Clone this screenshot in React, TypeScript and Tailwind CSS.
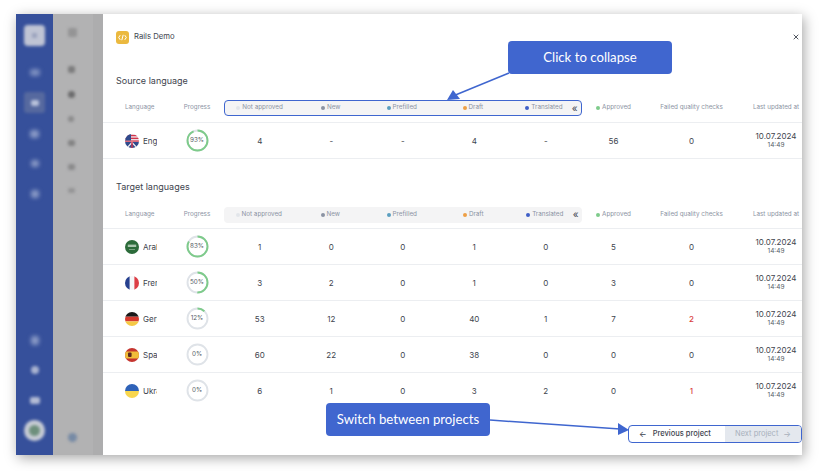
const gridCols = "grid grid-cols-[67px_54px_71.5px_71.5px_71.5px_71.5px_71.5px_64px_92px_65px]";

const groupCols = [
  { label: "Not approved", dot: "bg-[#e2e5ea]" },
  { label: "New", dot: "bg-[#8b93a3]" },
  { label: "Prefilled", dot: "bg-[#5b9fc0]" },
  { label: "Draft", dot: "bg-[#ee9f45]" },
  { label: "Translated", dot: "bg-[#3f5fc7]" },
];

function Flag({ code }: { code: string }) {
  return (
    <svg width="14" height="14" viewBox="0 0 14 14" className="shrink-0">
      <defs>
        <clipPath id={`clip-${code}`}>
          <circle cx="7" cy="7" r="7" />
        </clipPath>
      </defs>
      <g clipPath={`url(#clip-${code})`}>
        {code === "en" && (
          <>
            <rect width="14" height="14" fill="#f0eef2" />
            <rect y="0.8" width="14" height="1.5" fill="#d2334a" />
            <rect y="3.6" width="14" height="1.5" fill="#d2334a" />
            <rect y="6.4" width="14" height="1.3" fill="#d2334a" />
            <rect width="6" height="6.5" fill="#2f4a8c" />
            <rect y="8" width="14" height="6" fill="#2f4a8c" />
            <path d="M2 14 7 8.5 12 14" stroke="#f0eef2" strokeWidth="1.2" fill="none" />
            <path d="M7 8v6" stroke="#d2334a" strokeWidth="1.4" />
          </>
        )}
        {code === "ar" && (
          <>
            <rect width="14" height="14" fill="#2c6b3a" />
            <rect x="2.8" y="4.6" width="8.4" height="2.4" fill="#a9c5ae" />
            <rect x="4" y="9.2" width="6" height="0.6" fill="#a9c5ae" />
          </>
        )}
        {code === "fr" && (
          <>
            <rect width="14" height="14" fill="#f6f6f8" />
            <rect width="4.6" height="14" fill="#26408f" />
            <rect x="9.4" width="4.6" height="14" fill="#dc3d45" />
          </>
        )}
        {code === "de" && (
          <>
            <rect width="14" height="4.7" fill="#1a1a1a" />
            <rect y="4.7" width="14" height="4.7" fill="#d63a2f" />
            <rect y="9.4" width="14" height="4.6" fill="#f5c945" />
          </>
        )}
        {code === "es" && (
          <>
            <rect width="14" height="14" fill="#c5352f" />
            <rect y="3.5" width="14" height="7" fill="#f0bd3a" />
            <rect x="3" y="4.5" width="3.6" height="4.5" rx="1" fill="#5d2a1e" />
          </>
        )}
        {code === "uk" && (
          <>
            <rect width="14" height="7" fill="#2f62b8" />
            <rect y="7" width="14" height="7" fill="#f8d64e" />
          </>
        )}
      </g>
    </svg>
  );
}

function Ring({ pct }: { pct: number }) {
  const r = 10;
  const c = 2 * Math.PI * r;
  return (
    <div className="relative flex h-[23px] w-[23px] items-center justify-center">
      <svg width="23" height="23" viewBox="0 0 23 23" className="absolute inset-0 -rotate-90">
        <circle cx="11.5" cy="11.5" r={r} fill="none" stroke="#dfe3e8" strokeWidth="1.9" />
        {pct > 0 && (
          <circle
            cx="11.5"
            cy="11.5"
            r={r}
            fill="none"
            stroke="#7ecb8b"
            strokeWidth="1.9"
            strokeDasharray={`${(c * pct) / 100} ${c}`}
          />
        )}
      </svg>
      <span className="text-[6.3px] text-[#555c66]">{pct}%</span>
    </div>
  );
}

function HeaderRow({ outlined }: { outlined?: boolean }) {
  return (
    <div className={`${gridCols} h-[16px] items-center text-[6.3px] text-[#8b93a3]`}>
      <div className="pl-[22px]">Language</div>
      <div className="text-center">Progress</div>
      <div
        className={`relative col-span-5 grid h-[16px] grid-cols-5 items-center rounded-[4px] bg-[#f4f4f5] ${
          outlined ? "border border-[#3f66cf]" : ""
        }`}
      >
        {groupCols.map((g) => (
          <div key={g.label} className="flex items-center justify-center gap-[2px] pr-[2px]">
            <span className={`h-[4px] w-[4px] rounded-full ${g.dot}`} />
            {g.label}
          </div>
        ))}
        <span className="absolute right-[3px] top-0 text-[10px] leading-[14px] text-[#444a54]">«</span>
      </div>
      <div className="flex items-center justify-center gap-[2px]">
        <span className="h-[4px] w-[4px] rounded-full bg-[#7ecb8b]" />
        Approved
      </div>
      <div className="text-center">Failed quality checks</div>
      <div className="whitespace-nowrap pl-[12px] text-center">Last updated at</div>
    </div>
  );
}

function Row({
  code,
  name,
  pct,
  vals,
  red,
}: {
  code: string;
  name: string;
  pct: number;
  vals: (number | string)[];
  red?: boolean;
}) {
  return (
    <div className={`${gridCols} h-[36px] items-center border-t-[1.5px] border-[#eceef1] text-[8px] text-[#3e444e]`}>
      <div className="flex items-center gap-[4px] pl-[22px]">
        <Flag code={code} />
        <span className="w-[14px] overflow-hidden whitespace-nowrap">{name}</span>
      </div>
      <div className="flex justify-center">
        <Ring pct={pct} />
      </div>
      {vals.slice(0, 6).map((v, i) => (
        <div key={i} className="text-center">
          {v}
        </div>
      ))}
      <div className={`text-center ${red ? "font-medium text-[#d9413f]" : ""}`}>{vals[6]}</div>
      <div className="pl-[12px] text-center leading-[9px]">
        <div>10.07.2024</div>
        <div className="text-[6.5px] text-[#555c66]">14:49</div>
      </div>
    </div>
  );
}

export default function App() {
  return (
    <div
      className="relative h-[471px] w-[832px] overflow-hidden bg-white pl-[16px] pt-[14px] text-[#3e444e]"
      style={{ fontFamily: "Inter, 'Liberation Sans', sans-serif" }}
    >
      <div className="flex h-[441px] w-[786px] shadow-[2px_3px_12px_rgba(0,0,0,0.35)]">
        {/* blurred app behind the modal */}
        <div className="flex w-[37px] shrink-0 flex-col items-center bg-[#36509b] pt-[11px]">
          <div className="flex h-[21px] w-[21px] items-center justify-center rounded-[4px] bg-[#bfc4d4] blur-[1.5px]">
            <div className="h-[5px] w-[5px] rounded-[1px] bg-[#9aa2bd]" />
          </div>
          <div className="mt-[23px] h-[7px] w-[10px] rounded-[3px] bg-[#7d8fc0] blur-[2px]" />
          <div className="mt-[16px] flex h-[21px] w-[21px] items-center justify-center rounded-[3px] bg-[#56699f] blur-[1.5px]">
            <div className="h-[6px] w-[8px] rounded-[2px] bg-[#b9c2da]" />
          </div>
          <div className="mt-[17px] h-[8px] w-[9px] rounded-[3px] bg-[#8a9ac6] blur-[2px]" />
          <div className="mt-[22px] h-[7px] w-[8px] rounded-[3px] bg-[#8a9ac6] blur-[2px]" />
          <div className="mt-[23px] h-[8px] w-[8px] rounded-[3px] bg-[#8a9ac6] blur-[2px]" />
          <div className="mt-auto h-[9px] w-[8px] rounded-[3px] bg-[#8a9ac6] blur-[2px]" />
          <div className="mt-[21px] h-[8px] w-[8px] rounded-full bg-[#a9b3d0] blur-[1.5px]" />
          <div className="mt-[23px] h-[7px] w-[10px] rounded-[2px] bg-[#b4bcd5] blur-[1.5px]" />
          <div className="mb-[14px] mt-[16px] flex h-[21px] w-[21px] items-center justify-center rounded-full bg-[#c9cdd6] blur-[1.5px]">
            <div className="h-[11px] w-[11px] rounded-full bg-[#6d8f7c]" />
          </div>
        </div>

        <div className="flex w-[50px] shrink-0 flex-col bg-[linear-gradient(90deg,#b2b2b3_80%,#adadae_80%)] pl-[15px] pt-[14px]">
          <div className="h-[9px] w-[9px] rounded-[2px] bg-[#949495] blur-[1.5px]" />
          <div className="mt-[29px] h-[7px] w-[7px] rounded-[2px] bg-[#7c7c7d] blur-[1.5px]" />
          <div className="mt-[18px] h-[7px] w-[7px] rounded-full bg-[#6a6a6b] blur-[1.5px]" />
          <div className="mt-[18px] h-[6px] w-[6px] rounded-full bg-[#8a8a8b] blur-[1.5px]" />
          <div className="mt-[18px] h-[6px] w-[7px] rounded-[2px] bg-[#828283] blur-[1.5px]" />
          <div className="mt-[18px] h-[6px] w-[7px] rounded-[2px] bg-[#8a8a8b] blur-[1.5px]" />
          <div className="mt-[18px] h-[5px] w-[7px] rounded-[2px] bg-[#949495] blur-[1.5px]" />
          <div className="mb-[13px] mt-auto h-[9px] w-[9px] rounded-full bg-[#768aa5] blur-[1.5px]" />
        </div>

        {/* modal */}
        <div className="flex w-[699px] flex-col bg-white">
          <div className="flex h-[45px] items-center justify-between pl-[13px] pr-[1px] pt-[1px]">
            <div className="flex items-center gap-[5px]">
              <div className="flex h-[13px] w-[13px] items-center justify-center rounded-[3px] bg-[#ebb93f]">
                <svg width="9" height="7" viewBox="0 0 9 7" fill="none" stroke="white" strokeWidth="1">
                  <path d="M2.2 1.2 0.7 3.5l1.5 2.3M6.8 1.2l1.5 2.3-1.5 2.3M5.2 0.8 3.8 6.2" />
                </svg>
              </div>
              <span className="text-[7.7px] text-[#3e444e]">Rails Demo</span>
            </div>
            <svg width="6" height="6" viewBox="0 0 6 6" className="mb-[1px] mr-[2px]" stroke="#3e444e" strokeWidth="0.9">
              <path d="M0.7 0.7 5.3 5.3M5.3 0.7 0.7 5.3" />
            </svg>
          </div>

          <div className="mt-[16px] pl-[13px] text-[9px] leading-[12px] text-[#3e444e]">Source language</div>
          <div className="mt-[13px]">
            <HeaderRow outlined />
          </div>
          <div className="mt-[6px]">
            <Row code="en" name="English" pct={93} vals={[4, "-", "-", 4, "-", 56, 0]} />
          </div>
          <div className="border-t-[1.5px] border-[#eceef1]" />

          <div className="mt-[22px] pl-[13px] text-[9px] leading-[12px] text-[#3e444e]">Target languages</div>
          <div className="mt-[14px]">
            <HeaderRow />
          </div>
          <div className="mt-[5px]">
            <Row code="ar" name="Arabic" pct={83} vals={[1, 0, 0, 1, 0, 5, 0]} />
            <Row code="fr" name="French" pct={50} vals={[3, 2, 0, 1, 0, 3, 0]} />
            <Row code="de" name="German" pct={12} vals={[53, 12, 0, 40, 1, 7, 2]} red />
            <Row code="es" name="Spanish" pct={0} vals={[60, 22, 0, 38, 0, 0, 0]} />
            <Row code="uk" name="Ukrainian" pct={0} vals={[6, 1, 0, 3, 2, 0, 1]} red />
          </div>

          <div className="mt-auto flex justify-end pb-[12px]">
            <div className="flex h-[18px] w-[174px] overflow-hidden rounded-[4px] border border-[#3f66cf] text-[7.5px]">
              <div className="flex w-[92px] items-center justify-center gap-[6px] font-medium text-[#3e444e]">
                <span className="text-[8px]">←</span>
                Previous project
              </div>
              <div className="ml-[4px] flex flex-1 items-center justify-center gap-[5px] bg-[#e4e8ee] text-[#a8b0bc]">
                Next project
                <span className="text-[8px]">→</span>
              </div>
            </div>
          </div>
        </div>
      </div>

      {/* annotations */}
      <svg width="832" height="471" className="pointer-events-none absolute left-0 top-0">
        <path d="M509 73 453 96" stroke="#3f66cf" strokeWidth="1.5" fill="none" />
        <path d="M447 100 453 90 460 99Z" fill="#3f66cf" />
        <path d="M490 420 620 429" stroke="#3f66cf" strokeWidth="1.5" fill="none" />
        <path d="M629 430 618 423 618 435Z" fill="#3f66cf" />
      </svg>
      <div
        className="absolute left-[508px] top-[41px] flex h-[33px] w-[164px] items-center justify-center rounded-[4px] bg-[#4066cf] text-[13.2px] text-white"
        style={{ fontFamily: "Lato, sans-serif" }}
      >
        Click to collapse
      </div>
      <div
        className="absolute left-[326px] top-[403px] flex h-[33px] w-[164px] items-center justify-center rounded-[4px] bg-[#4066cf] text-[13.2px] text-white"
        style={{ fontFamily: "Lato, sans-serif" }}
      >
        Switch between projects
      </div>
    </div>
  );
}
